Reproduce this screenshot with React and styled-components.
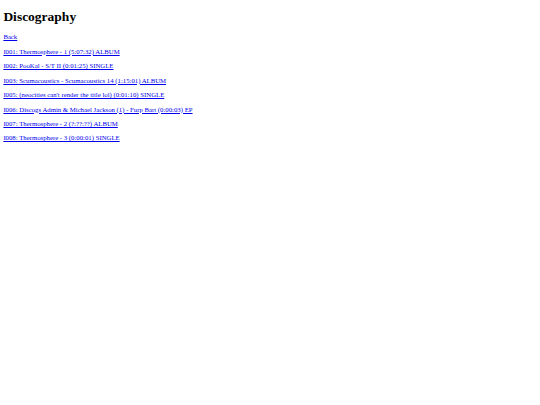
import React from 'react';
import styled, { createGlobalStyle } from 'styled-components';

const GlobalStyle = createGlobalStyle`
  body {
    margin: 3.375px;
    font-family: "Liberation Serif", "Times New Roman", serif;
    background: #fff;
    color: #000;
  }
`;

const Title = styled.h1`
  font-size: 13.5px;
  font-weight: bold;
  margin: 6px 0 8px;
`;

const Line = styled.p`
  font-size: 6.75px;
  margin: 7.45px 0;
`;

const Link = styled.a`
  color: #0000ee;
  text-decoration: underline;
`;

const releases = [
  'I001: Thermosphere - 1 (5:07:32) ALBUM',
  'I002: PooKal - S/T II (0:01:25) SINGLE',
  'I003: Scumacoustics - Scumacoustics 14 (1:15:01) ALBUM',
  "I005: (neocities can't render the title lol) (0:01:10) SINGLE",
  'I006: Discogs Admin & Michael Jackson (1) - Furp Bart (0:00:03) EP',
  'I007: Thermosphere - 2 (?:??:??) ALBUM',
  'I008: Thermosphere - 3 (0:00:01) SINGLE',
];

const App = () => {
  return (
    <>
      <GlobalStyle />
      <Title>Discography</Title>
      <Line>
        <Link href="#">Back</Link>
      </Line>
      {releases.map((r) => (
        <Line key={r}>
          <Link href="#">{r}</Link>
        </Line>
      ))}
    </>
  );
};

export default App;
